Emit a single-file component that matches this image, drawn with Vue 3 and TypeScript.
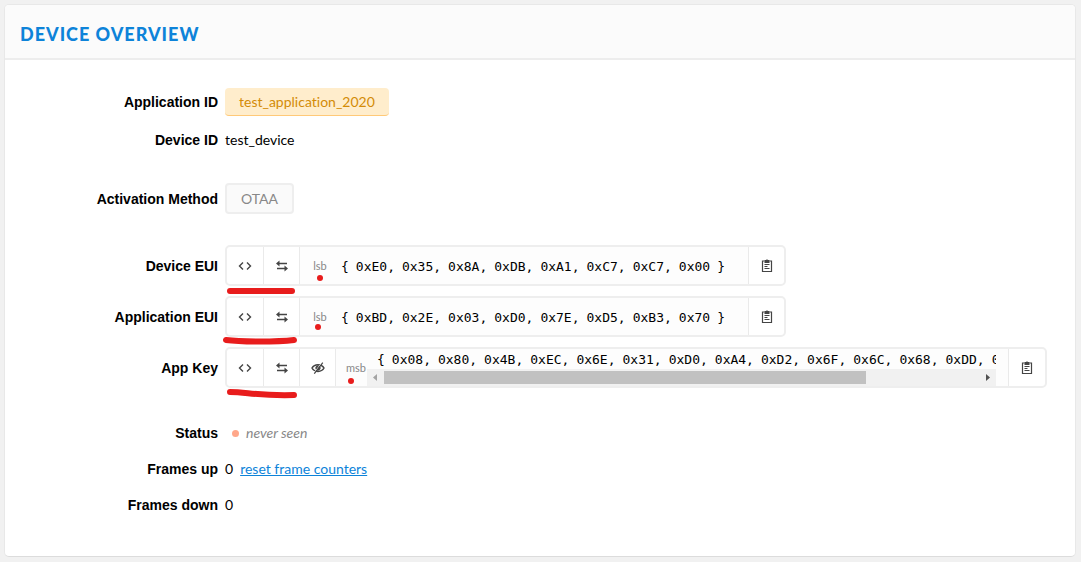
<script setup lang="ts">
interface KeyField {
  id: string
  label: string
  order: 'lsb' | 'msb'
  bytes: string[]
  secret: boolean
  underline: string
  dot: [number, number]
}

const fields: KeyField[] = [
  {
    id: 'device-eui',
    label: 'Device EUI',
    order: 'lsb',
    bytes: ['E0', '35', '8A', 'DB', 'A1', 'C7', 'C7', '00'],
    secret: false,
    underline: 'M5 46H67',
    dot: [95, 33],
  },
  {
    id: 'application-eui',
    label: 'Application EUI',
    order: 'lsb',
    bytes: ['BD', '2E', '03', 'D0', '7E', 'D5', 'B3', '70'],
    secret: false,
    underline: 'M1 44C16 46 52 46 69 44',
    dot: [93, 31],
  },
  {
    id: 'app-key',
    label: 'App Key',
    order: 'msb',
    bytes: ['08', '80', '4B', 'EC', '6E', '31', 'D0', 'A4', 'D2', '6F', '6C', '68', 'DD', '00'],
    secret: true,
    underline: 'M5 45C22 45 32 49 69 48',
    dot: [126, 34],
  },
]

function tokens(field: KeyField): string[] {
  const hex = field.bytes.map((b, i) => `0x${b}${i < field.bytes.length - 1 || field.secret ? ',' : ''}`)
  return field.secret ? ['{', ...hex] : ['{', ...hex, '}']
}
</script>

<template>
  <main class="card">
    <header class="card-header">
      <h1>DEVICE OVERVIEW</h1>
    </header>

    <div class="details">
      <div class="row">
        <span class="label">Application ID</span>
        <span class="app-id">test_application_2020</span>
      </div>
      <div class="row device-row">
        <span class="label">Device ID</span>
        <span>test_device</span>
      </div>
      <div class="row activation-row">
        <span class="label">Activation Method</span>
        <span class="method">OTAA</span>
      </div>

      <div class="fields">
        <div v-for="field in fields" :key="field.id" class="row">
          <span :id="field.id" class="label">{{ field.label }}</span>
          <div class="field" :class="{ wide: field.secret }" role="group" :aria-labelledby="field.id">
            <button type="button" class="format" aria-label="Toggle format">
              <svg width="14" height="12" viewBox="0 0 14 12" fill="none" stroke="#444" stroke-width="1.4">
                <path d="M5 2.500L1.500 6L5 9.500M9 2.500L12.500 6L9 9.500" />
              </svg>
            </button>
            <button type="button" aria-label="Switch byte order">
              <svg width="12" height="12" viewBox="0 0 12 12" fill="#444">
                <path d="M0 3.500L3.500 0.500V2.700H11V4.300H3.500V6.500ZM12 8.500L8.500 5.500V7.700H1V9.300H8.500V11.500Z" />
              </svg>
            </button>
            <button v-if="field.secret" type="button" aria-label="Hide key">
              <svg width="14" height="12" viewBox="0 0 14 12" fill="none" stroke="#444">
                <path d="M1 6C3.500 1.500 10.500 1.500 13 6C10.500 10.500 3.500 10.500 1 6Z" stroke-width="1.500" />
                <circle cx="7" cy="6" r="2.200" fill="#444" />
                <path d="M2.500 11.500L11 0.500" stroke="#fff" stroke-width="1" />
                <path d="M3.300 11.700L11.800 0.700" stroke-width="1.200" />
              </svg>
            </button>
            <div class="content">
              <span class="order">{{ field.order }}</span>
              <div class="value">
                <code class="bytes"><span v-for="(token, i) in tokens(field)" :key="i">{{ token }}</span></code>
                <div v-if="field.secret" class="scrollbar" aria-hidden="true">
                  <svg width="17" height="17" viewBox="0 0 17 17"><path d="M10 5V12L6 8.500Z" fill="#a3a3a3" /></svg>
                  <div class="track"><div class="thumb"></div></div>
                  <svg width="17" height="17" viewBox="0 0 17 17"><path d="M7 5V12L11 8.500Z" fill="#505050" /></svg>
                </div>
              </div>
            </div>
            <button type="button" class="copy" aria-label="Copy to clipboard">
              <svg width="12" height="14" viewBox="0 0 12 14" fill="none" stroke="#444">
                <path d="M3.500 2H1.500V12.500H10.500V2H8.500" stroke-width="1.200" />
                <path d="M3.500 1H5L6 0.300L7 1H8.500V4H3.500Z" fill="#444" stroke="none" />
                <path d="M3.500 5.500H8.500M3.500 7.500H6.500M3.500 9.500H8.500" stroke-width="1.200" />
              </svg>
            </button>
            <svg class="marks" width="140" height="54" viewBox="0 0 140 54" aria-hidden="true">
              <path :d="field.underline" fill="none" stroke="#e81c1c" stroke-width="6" stroke-linecap="round" />
              <circle :cx="field.dot[0]" :cy="field.dot[1]" r="3" fill="#e81c1c" />
            </svg>
          </div>
        </div>
      </div>

      <div class="stats">
        <div class="row">
          <span class="label">Status</span>
          <span class="status"><i class="status-dot"></i><em>never seen</em></span>
        </div>
        <div class="row">
          <span class="label">Frames up</span>
          <span class="frames">0 <a href="#reset">reset frame counters</a></span>
        </div>
        <div class="row">
          <span class="label">Frames down</span>
          <span>0</span>
        </div>
      </div>
    </div>
  </main>
</template>

<style>
body {
  background: #f1f1f1;
}
</style>

<style scoped>
* {
  box-sizing: border-box;
}

.card {
  margin: 4px 5px 5px 4px;
  border: 1px solid #e8e8e8;
  border-bottom-color: #dcdcdc;
  border-radius: 5px;
  background: #fff;
  color: #000;
  font: 14px/20px Lato, "Liberation Sans", sans-serif;
  font-variant-ligatures: none;
  overflow: hidden;
}

.card-header {
  display: flex;
  align-items: center;
  height: 55px;
  padding: 4px 15px 0;
  background: #fbfbfb;
  border-bottom: 2px solid #ededed;
}

h1 {
  margin: 0;
  color: #0d83d9;
  font-size: 18px;
  font-weight: 900;
  letter-spacing: 1px;
}

.details {
  padding: 28px 28px 41px 0;
}

.row {
  display: grid;
  grid-template-columns: 213px minmax(0, 1fr);
  align-items: center;
  justify-items: start;
  column-gap: 7px;
}

.label {
  justify-self: end;
  font-family: "Liberation Sans", Arial, sans-serif;
  font-weight: 700;
}

.app-id {
  height: 28px;
  padding: 0 14px;
  line-height: 28px;
  border-radius: 4px;
  border-bottom: 1px solid #ffc978;
  background: #ffedcc;
  color: #d38b07;
}

.device-row {
  margin-top: 14px;
}

.activation-row {
  margin-top: 33px;
}

.method {
  height: 31px;
  padding: 0 14px;
  line-height: 27px;
  border: 2px solid #eee;
  border-radius: 4px;
  background: #fafafa;
  color: #888;
}

.fields {
  display: grid;
  gap: 10px;
  margin-top: 31px;
}

.field {
  position: relative;
  display: flex;
  height: 41px;
  border: 2px solid #eee;
  border-radius: 5px;
  background: #fff;
}

.wide {
  width: 100%;
}

button {
  display: flex;
  flex: none;
  align-items: center;
  justify-content: center;
  width: 36px;
  padding: 0;
  border: 0;
  border-right: 1px solid #eaeaea;
  background: none;
}

button.format {
  width: 37px;
}

button.copy {
  border-right: 0;
  border-left: 1px solid #eaeaea;
}

.wide button.copy {
  width: 37px;
}

.content {
  display: flex;
  flex: 1;
  min-width: 0;
  align-items: center;
  padding: 0 12px 0 9px;
  background: #fdfdfd;
}

.order {
  flex: none;
  width: 22px;
  color: #888;
  font-size: 11px;
  text-align: center;
}

.value {
  flex: 1;
  min-width: 405px;
  overflow: hidden;
}

.bytes {
  display: flex;
  gap: 7px;
  padding: 2px 10px 0;
  font: 13px/18px "DejaVu Sans Mono", monospace;
  white-space: nowrap;
}

.scrollbar {
  display: flex;
  height: 17px;
  background: #f1f1f1;
}

.track {
  flex: 1;
  padding: 2px 0;
}

.thumb {
  width: 81%;
  height: 13px;
  background: #c1c1c1;
}

.marks {
  position: absolute;
  top: -2px;
  left: -2px;
  overflow: visible;
  pointer-events: none;
}

.stats {
  display: grid;
  gap: 16px;
  margin-top: 35px;
}

.status {
  display: flex;
  align-items: center;
  gap: 7px;
  padding-left: 7px;
  color: #888;
}

.status-dot {
  width: 7px;
  height: 7px;
  border-radius: 50%;
  background: #ffa78a;
}

.frames {
  display: flex;
  gap: 7px;
}

a {
  color: #0d83d9;
}
</style>
